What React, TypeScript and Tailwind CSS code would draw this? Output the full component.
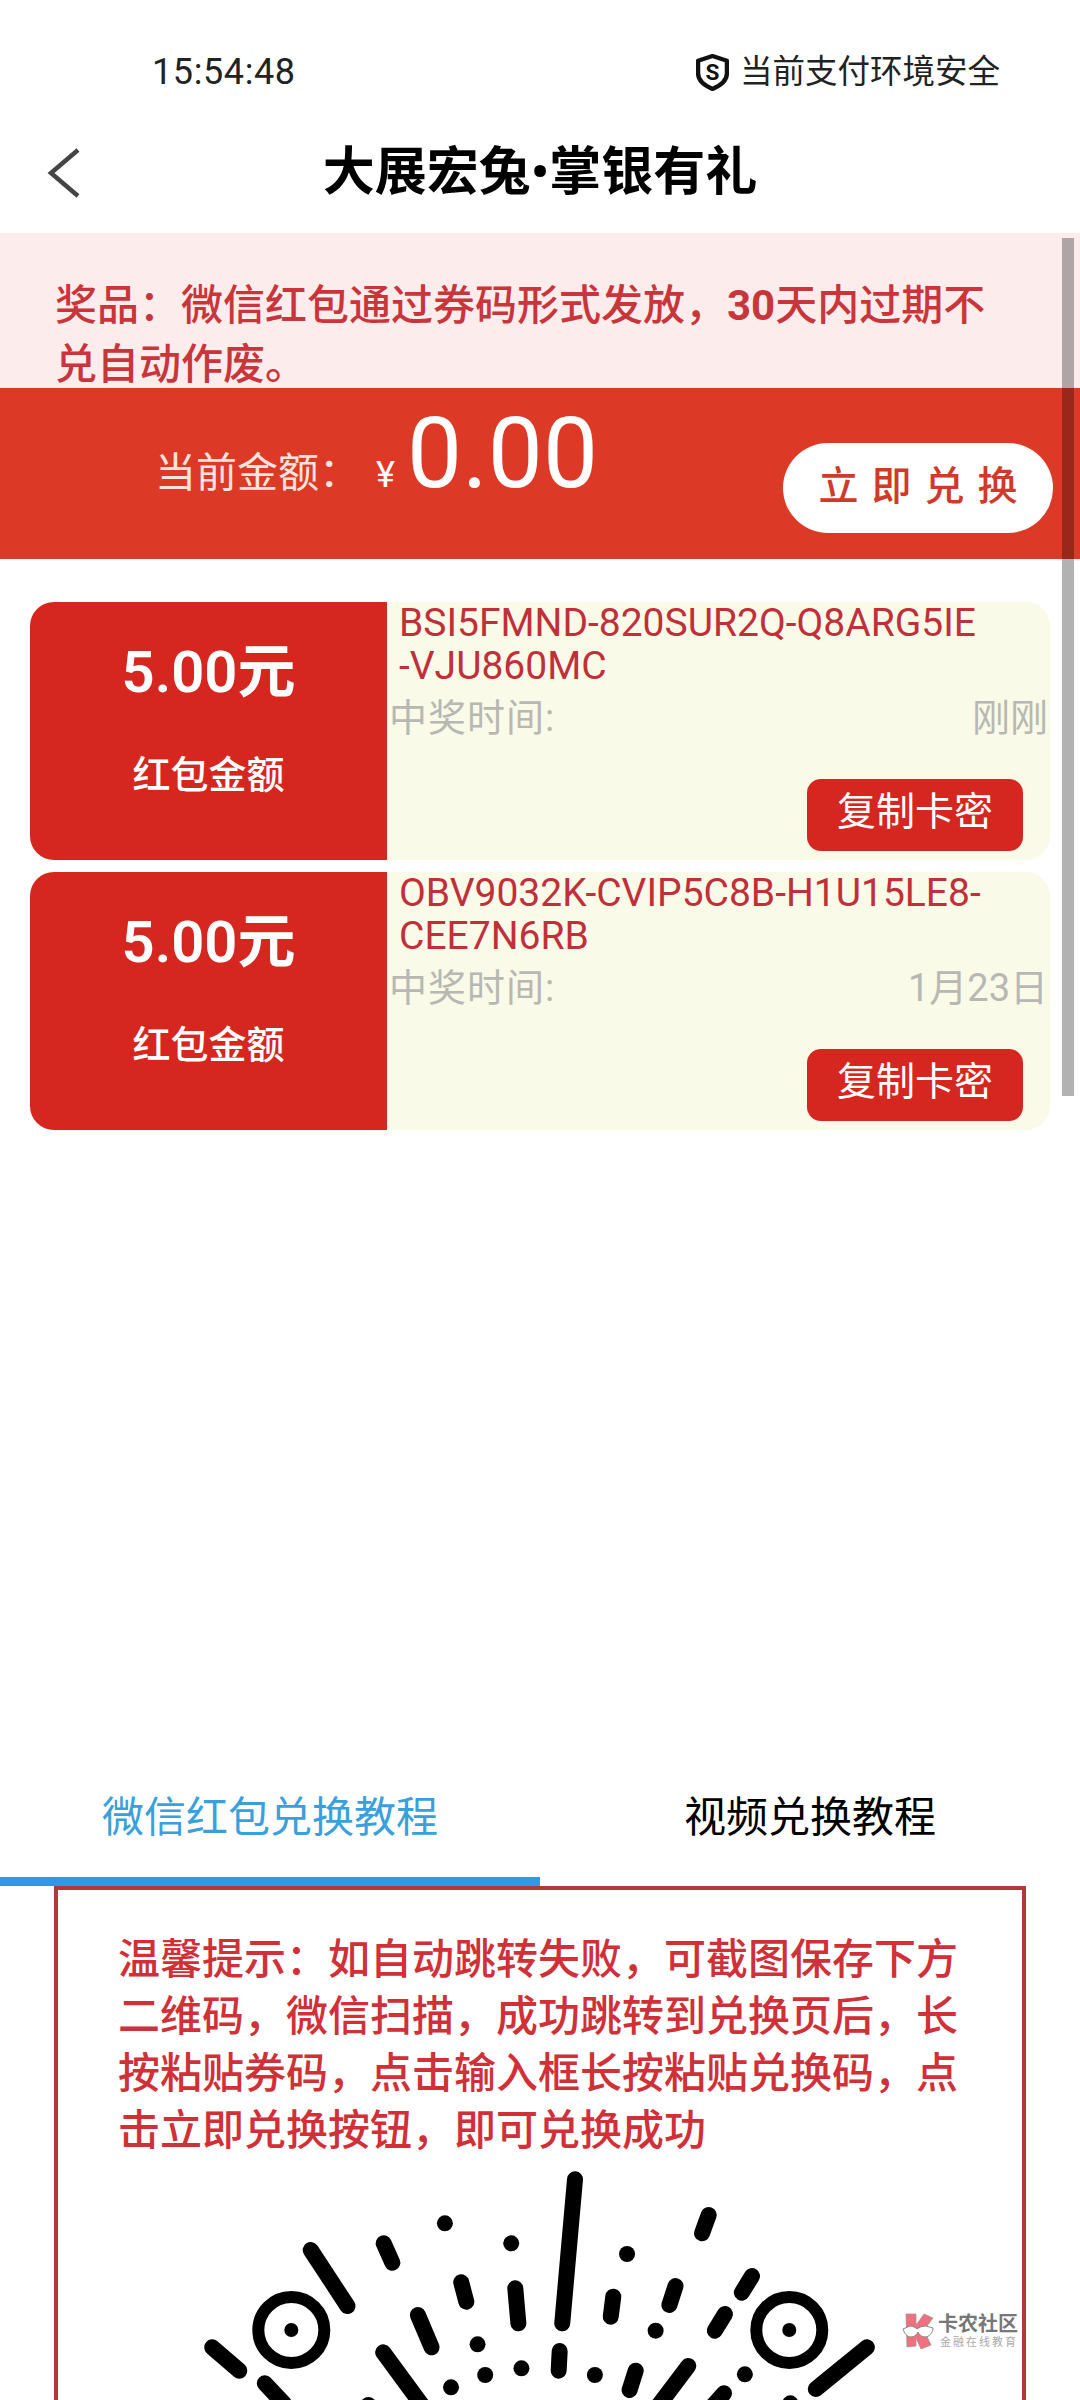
import React from "react";

const cjk = "font-['Roboto','Noto_Sans_CJK_SC',sans-serif]";

// QR coordinates are stated at 1.96 x 3 of the final pixel size
const bars: number[][] = [
  [833, 88, 808, 520],
  [1095, 195, 1082, 250],
  [578, 220, 578, 220],
  [708, 280, 708, 280],
  [935, 312, 935, 312],
  [458, 280, 475, 338],
  [315, 300, 387, 468],
  [610, 397, 620, 455],
  [716, 415, 722, 520],
  [908, 440, 903, 500],
  [1030, 408, 1018, 465],
  [1180, 378, 1160, 428],
  [1127, 492, 1107, 542],
  [991, 542, 991, 542],
  [525, 495, 552, 592],
  [642, 583, 642, 583],
  [122, 592, 175, 662],
  [803, 603, 801, 662],
  [728, 655, 728, 655],
  [657, 675, 657, 675],
  [590, 712, 590, 712],
  [872, 675, 872, 675],
  [952, 662, 940, 720],
  [1055, 648, 985, 790],
  [1166, 673, 1166, 673],
  [1405, 592, 1305, 717],
  [457, 607, 545, 790],
  [225, 700, 262, 760],
  [1125, 730, 1090, 790],
  [1255, 760, 1255, 790],
  [428, 765, 428, 790],
];

function Qr() {
  return (
    <svg width="800" height="235" viewBox="0 15 800 235" className="block ml-[92px] mt-[6px]">
      {bars.map((b, i) => (
        <line
          key={i}
          x1={b[0] / 1.96}
          y1={b[1] / 3}
          x2={b[2] / 1.96}
          y2={b[3] / 3}
          stroke="#000"
          strokeWidth="16"
          strokeLinecap="round"
        />
      ))}
      {[277, 1253].map((x) => (
        <g key={x}>
          <circle cx={x / 1.96} cy={180} r={33} fill="none" stroke="#000" strokeWidth="12" />
          <circle cx={x / 1.96} cy={180} r={7} fill="#000" />
        </g>
      ))}
    </svg>
  );
}

function Card({ lines, when }: { lines: string[]; when: string }) {
  return (
    <div className="flex h-[258px] rounded-[24px] bg-[#fafae8]">
      <div className="w-[357px] rounded-l-[24px] bg-[#d62620] flex flex-col items-center text-white">
        <div className="mt-[35px] h-[70px] leading-[70px] text-[58px] font-semibold">5.00元</div>
        <div className="mt-[33px] h-[70px] leading-[70px] text-[38px] font-medium">红包金额</div>
      </div>
      <div className="flex-1 min-w-0 flex flex-col">
        <div className="pl-[12px] text-[39px] leading-[43px] text-[#c0303a] whitespace-nowrap">
          {lines.map((l) => (
            <div key={l}>{l}</div>
          ))}
        </div>
        <div className="mt-[8px] pl-[2px] pr-[2px] flex justify-between text-[38px] leading-[44px] text-[#b8b8b2]">
          <span className="tracking-[1px]">中奖时间:</span>
          <span>{when}</span>
        </div>
        <button className="mt-auto mb-[9px] mr-[27px] self-end w-[216px] h-[72px] pb-[6px] rounded-[14px] bg-[#d62620] text-white text-[39px] leading-[60px] text-center">
          复制卡密
        </button>
      </div>
    </div>
  );
}

export default function App() {
  return (
    <div className={`${cjk} relative w-[1080px] h-[2400px] overflow-hidden bg-white text-black`}>
      {/* status */}
      <div className="h-[112px] pt-[32px]">
        <div className="h-[80px] pl-[152px] pr-[80px] flex items-center justify-between">
          <span className="text-[36px] tracking-[0.6px] text-[#222]">15:54:48</span>
          <span className="flex items-center gap-[11px] text-[32.5px] text-[#222]">
            <svg width="33" height="37" viewBox="0 0 32 36">
              <path
                d="M16 2 L30 6.5 V19 C30 26 23 31 16 34 C9 31 2 26 2 19 V6.5 Z"
                fill="none"
                stroke="#111"
                strokeWidth="4.2"
                strokeLinejoin="round"
              />
              <text x="16" y="25" textAnchor="middle" fontSize="22" fontWeight="700" fill="#111">
                S
              </text>
            </svg>
            当前支付环境安全
          </span>
        </div>
      </div>

      {/* title */}
      <div className="h-[121px] grid grid-cols-[1fr_auto_1fr] items-center">
        <div className="pl-[47px]">
          <svg width="34" height="50" viewBox="0 0 34 50" className="block">
            <path d="M31 2 L4 25 L31 48" fill="none" stroke="#444" strokeWidth="4.5" />
          </svg>
        </div>
        <div className="text-[52px] leading-[60px] font-semibold">大展宏兔•掌银有礼</div>
        <div />
      </div>

      {/* notice */}
      <div className="h-[155px] overflow-hidden bg-[#fdecec] pt-[43px] pl-[55px] pr-[70px] text-[42px] leading-[59px] font-medium text-[#c8363c]">
        奖品：微信红包通过券码形式发放，<b className="font-bold">30</b>天内过期不兑自动作废。
      </div>

      {/* balance */}
      <div className="h-[171px] bg-[#dc3a26] flex items-start text-white">
        <div className="ml-[155px] mt-[18px] flex items-baseline">
          <span className="text-[41px] leading-[48px] text-[#fbe3dd]">当前金额：</span>
          <span className="ml-[16px] text-[36px] leading-[48px]">¥</span>
          <span className="ml-[12px] text-[98px] leading-[96px]">0.00</span>
        </div>
        <button className="ml-auto mr-[27px] mt-[55px] w-[270px] h-[90px] pl-[13px] pb-[2px] rounded-full bg-white text-[#cf3a2a] text-[40px] font-medium tracking-[13px] text-center">
          立即兑换
        </button>
      </div>

      {/* cards */}
      <div className="mt-[43px] px-[30px] flex flex-col gap-[12px]">
        <Card lines={["BSI5FMND-820SUR2Q-Q8ARG5IE", "-VJU860MC"]} when="刚刚" />
        <Card lines={["OBV9032K-CVIP5C8B-H1U15LE8-", "CEE7N6RB"]} when="1月23日" />
      </div>

      {/* tabs */}
      <div className="mt-[627px] grid grid-cols-2 text-[42px]">
        <div className="h-[129px] border-b-[9px] border-[#3098ea] flex items-center justify-center text-[#3aa0dc]">
          微信红包兑换教程
        </div>
        <div className="h-[129px] pb-[9px] flex items-center justify-center text-black">视频兑换教程</div>
      </div>

      {/* tutorial */}
      <div className="mx-[54px] border-[4px] border-[#b03a3a] pt-[41px] pb-[40px]">
        <div className="pl-[60px] pr-[54px] text-[42px] leading-[57px] font-medium text-[#d03038]">
          温馨提示：如自动跳转失败，可截图保存下方二维码，微信扫描，成功跳转到兑换页后，长按粘贴券码，点击输入框长按粘贴兑换码，点击立即兑换按钮，即可兑换成功
        </div>
        <Qr />
      </div>

      {/* scrollbar */}
      <div className="absolute left-[1062px] top-[238px] w-[12px] h-[858px] bg-black/30" />

      {/* watermark */}
      <div className="absolute left-[902px] top-[2312px] flex items-center gap-[4px]">
        <svg width="32" height="36" viewBox="0 0 32 36">
          <path d="M4 1 H14 V12 L22 1 L31 5 L22 17 L29 32 L19 36 L14 25 V33 L5 34 Z" fill="#f0707f" stroke="#999" strokeWidth="0.8" />
          <path d="M1 16 L8 13 C11 13 14 15 15 16 C17 14 21 13 24 13 L31 15 C31 20 27 24 23 24 C19 24 17 21 16 19 C15 21 13 24 9 24 C5 24 2 20 1 16 Z" fill="#fff" stroke="#888" strokeWidth="1" />
        </svg>
        <div className="flex flex-col">
          <span className="text-[20px] leading-[24px] font-bold text-[#777]">卡农社区</span>
          <span className="text-[11px] leading-[14px] tracking-[2px] text-[#aaa] ml-[2px]">金融在线教育</span>
        </div>
      </div>
    </div>
  );
}
